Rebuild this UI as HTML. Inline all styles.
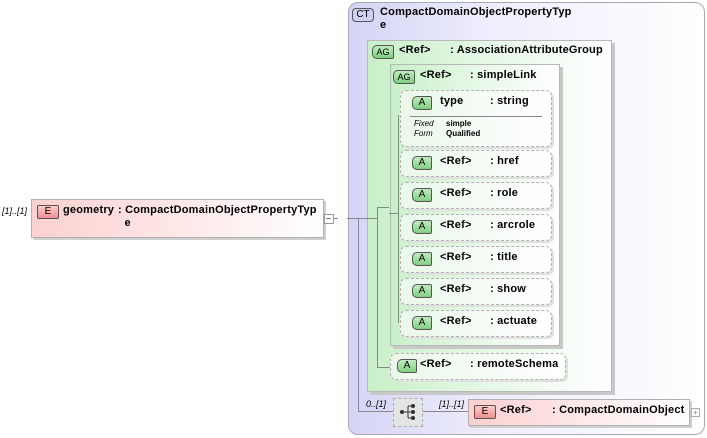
<!DOCTYPE html>
<html><head><meta charset="utf-8"><style>
body{margin:0;width:707px;height:438px;background:#fff;position:relative;overflow:hidden;font-family:"Liberation Sans",Arial,sans-serif;font-size:11px;color:#000}
.a{position:absolute}
.ct{left:348px;top:2px;width:355px;height:431px;border:1px solid #a8a8b8;border-radius:10px;background:linear-gradient(90deg,#d4d4f6 0%,#eeeefc 40%,#fff 100%)}
.ag{background:linear-gradient(90deg,#c8f0c8 0%,#e6f8e6 50%,#fff 100%);border:1px solid #b8b8b8;box-shadow:3px 3px 0 #c8c8c8}
.attr{background:linear-gradient(90deg,#eaf8ea,#fff);border:1px dashed #b0b0b0;border-radius:6px;box-shadow:2px 2px 0 #e0e0e0}
.tag{position:absolute;height:12px;border:1px solid #555;font-size:10px;line-height:12px;text-align:center;border-radius:5px 2px 2px 5px}
.A{background:linear-gradient(#c0ecc0,#80d080);width:18px}
.AG{background:linear-gradient(#c0ecc0,#80d080);width:20px;font-size:9px}
.E{background:linear-gradient(#fcc,#f09090);width:20px;border-radius:2px}
.a.t{font-weight:bold;letter-spacing:0.2px}
.l{position:absolute;background:#888}
</style></head><body>
<div class="a ct"></div>
<div class="tag" style="left:352px;top:8px;width:20px;background:#d0d0f4;border-radius:4px;font-size:10px">CT</div>
<div class="a t" style="left:380px;top:6px;line-height:13px">CompactDomainObjectPropertyTyp<br>e</div>

<div class="a ag" style="left:367px;top:40px;width:243px;height:350px"></div>
<div class="tag AG" style="left:372px;top:45px">AG</div>
<div class="a t" style="left:399px;top:44px">&lt;Ref&gt;</div>
<div class="a t" style="left:450px;top:44px">: AssociationAttributeGroup</div>

<div class="a ag" style="left:390px;top:64px;width:168px;height:280px"></div>
<div class="tag AG" style="left:393px;top:70px">AG</div>
<div class="a t" style="left:420px;top:69px">&lt;Ref&gt;</div>
<div class="a t" style="left:470px;top:69px">: simpleLink</div>

<!-- lines -->
<div class="l" style="left:323px;top:218px;width:15px;height:1px"></div>
<div class="l" style="left:347px;top:218px;width:11px;height:1px"></div>
<div class="l" style="left:358px;top:218px;width:1px;height:193px"></div>
<div class="l" style="left:358px;top:411px;width:35px;height:1px"></div>
<div class="l" style="left:358px;top:218px;width:20px;height:1px"></div>
<div class="l" style="left:377px;top:207px;width:1px;height:160px"></div>
<div class="l" style="left:377px;top:367px;width:14px;height:1px"></div>
<div class="l" style="left:377px;top:207px;width:12px;height:1px"></div>
<div class="l" style="left:398px;top:115px;width:1px;height:208px"></div>
<div class="l" style="left:389px;top:213px;width:9px;height:1px"></div>
<div class="l" style="left:423px;top:411px;width:45px;height:1px"></div>

<div class="a attr" style="left:400px;top:90px;width:150px;height:55px"></div>
<div class="tag A" style="left:412px;top:96px">A</div>
<div class="a t" style="left:440px;top:95px">type</div>
<div class="a t" style="left:490px;top:95px">: string</div>
<div class="l" style="left:410px;top:116px;width:132px;height:1px"></div>
<div class="a" style="left:414px;top:119px;font-size:8px;font-style:italic;line-height:10px">Fixed<br>Form</div>
<div class="a" style="left:446px;top:119px;font-size:8px;font-weight:bold;line-height:10px">simple<br>Qualified</div>

<div class="a attr" style="left:400px;top:150px;width:150px;height:25px"></div>
<div class="tag A" style="left:412px;top:156px">A</div><div class="a t" style="left:440px;top:155px">&lt;Ref&gt;</div><div class="a t" style="left:490px;top:155px">: href</div>
<div class="a attr" style="left:400px;top:182px;width:150px;height:25px"></div>
<div class="tag A" style="left:412px;top:188px">A</div><div class="a t" style="left:440px;top:187px">&lt;Ref&gt;</div><div class="a t" style="left:490px;top:187px">: role</div>
<div class="a attr" style="left:400px;top:214px;width:150px;height:25px"></div>
<div class="tag A" style="left:412px;top:220px">A</div><div class="a t" style="left:440px;top:219px">&lt;Ref&gt;</div><div class="a t" style="left:490px;top:219px">: arcrole</div>
<div class="a attr" style="left:400px;top:246px;width:150px;height:25px"></div>
<div class="tag A" style="left:412px;top:252px">A</div><div class="a t" style="left:440px;top:251px">&lt;Ref&gt;</div><div class="a t" style="left:490px;top:251px">: title</div>
<div class="a attr" style="left:400px;top:278px;width:150px;height:25px"></div>
<div class="tag A" style="left:412px;top:284px">A</div><div class="a t" style="left:440px;top:283px">&lt;Ref&gt;</div><div class="a t" style="left:490px;top:283px">: show</div>
<div class="a attr" style="left:400px;top:310px;width:150px;height:25px"></div>
<div class="tag A" style="left:412px;top:316px">A</div><div class="a t" style="left:440px;top:315px">&lt;Ref&gt;</div><div class="a t" style="left:490px;top:315px">: actuate</div>

<div class="a attr" style="left:390px;top:353px;width:174px;height:25px"></div>
<div class="tag A" style="left:397px;top:359px">A</div><div class="a t" style="left:420px;top:358px">&lt;Ref&gt;</div><div class="a t" style="left:470px;top:358px">: remoteSchema</div>

<!-- geometry -->
<div class="a" style="left:2px;top:206px;font-size:9px;font-style:italic">[1]..[1]</div>
<div class="a" style="left:31px;top:199px;width:291px;height:37px;border:1px solid #b0b0b0;background:linear-gradient(90deg,#fcd0d0,#fff);box-shadow:2px 2px 0 #d0d0d0"></div>
<div class="tag E" style="left:37px;top:205px">E</div>
<div class="a t" style="left:63px;top:204px">geometry</div>
<div class="a t" style="left:118px;top:204px;line-height:13px">: CompactDomainObjectPropertyTyp<br>&nbsp;&nbsp;e</div>
<div class="a" style="left:324px;top:214px;width:8px;height:8px;border:1px solid #999;background:#fff"></div>
<div class="l" style="left:326px;top:218px;width:5px;height:1px"></div>

<!-- sequence -->
<div class="a" style="left:366px;top:399px;font-size:9px;font-style:italic">0..[1]</div>
<div class="a" style="left:393px;top:398px;width:28px;height:27px;border:1px dashed #aaa;background:#e4e4e4"></div>
<svg class="a" style="left:398px;top:402px" width="20" height="20"><circle cx="4" cy="10" r="2" fill="#333"/><line x1="4" y1="10" x2="10" y2="10" stroke="#333"/><line x1="10" y1="4" x2="10" y2="16" stroke="#333"/><line x1="10" y1="4" x2="15" y2="4" stroke="#333"/><line x1="10" y1="10" x2="15" y2="10" stroke="#333"/><line x1="10" y1="16" x2="15" y2="16" stroke="#333"/><circle cx="15" cy="4" r="2" fill="#333"/><circle cx="15" cy="10" r="2" fill="#333"/><circle cx="15" cy="16" r="2" fill="#333"/></svg>
<div class="a" style="left:439px;top:399px;font-size:9px;font-style:italic">[1]..[1]</div>
<div class="a" style="left:468px;top:399px;width:220px;height:25px;border:1px solid #b0b0b0;background:linear-gradient(90deg,#fcd0d0,#fff);box-shadow:2px 2px 0 #d0d0d0"></div>
<div class="tag E" style="left:474px;top:405px">E</div>
<div class="a t" style="left:500px;top:404px">&lt;Ref&gt;</div>
<div class="a t" style="left:552px;top:404px">: CompactDomainObject</div>
<div class="a" style="left:691px;top:408px;width:7px;height:7px;border:1px solid #aaa;background:#fff;font-size:8px;line-height:7px;text-align:center;color:#888">+</div>
</body></html>
